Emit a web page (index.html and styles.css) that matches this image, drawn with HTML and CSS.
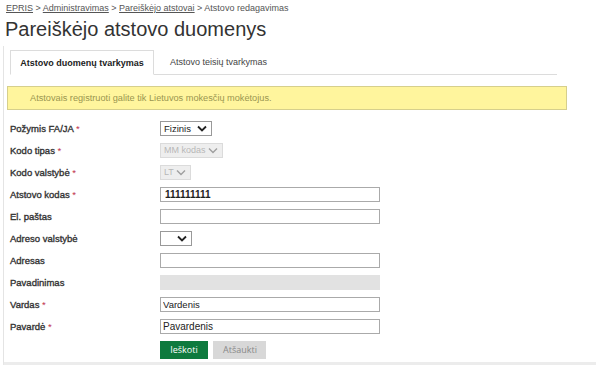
FILE: index.html
```html
<!DOCTYPE html>
<html lang="lt">
<head>
    <meta charset="UTF-8">
    <meta name="viewport" content="width=device-width, initial-scale=1.0">
    <title>Atstovo redagavimas</title>

    <link rel="stylesheet" href="styles.css">
</head>
<body>

    <div class="crumbs">
        <a href="#">EPRIS</a> &gt; <a href="#">Administravimas</a> &gt; <a href="#">Pareiškėjo atstovai</a> &gt; Atstovo redagavimas
    </div>
    <h1>Pareiškėjo atstovo duomenys</h1>

    <div class="panel">
        <div class="tabs">
            <div class="tab active">Atstovo duomenų tvarkymas</div>
            <div class="tab">Atstovo teisių tvarkymas</div>
        </div>

        <div class="alert">Atstovais registruoti galite tik Lietuvos mokesčių mokėtojus.</div>

        <div class="form">
            <div class="row">
                <label>Požymis FA/JA <span class="req">*</span></label>
                <select class="sel sel-fa"><option>Fizinis</option></select>
            </div>
            <div class="row">
                <label>Kodo tipas <span class="req">*</span></label>
                <select class="sel sel-mm" disabled><option>MM kodas</option></select>
            </div>
            <div class="row">
                <label>Kodo valstybė <span class="req">*</span></label>
                <select class="sel sel-lt" disabled><option>LT</option></select>
            </div>
            <div class="row">
                <label>Atstovo kodas <span class="req">*</span></label>
                <input class="txt txt-code" type="text" value="111111111">
            </div>
            <div class="row">
                <label>El. paštas</label>
                <input class="txt" type="text">
            </div>
            <div class="row">
                <label>Adreso valstybė</label>
                <select class="sel sel-empty"><option></option></select>
            </div>
            <div class="row">
                <label>Adresas</label>
                <input class="txt" type="text">
            </div>
            <div class="row">
                <label>Pavadinimas</label>
                <input class="txt" type="text" disabled>
            </div>
            <div class="row">
                <label>Vardas <span class="req">*</span></label>
                <input class="txt txt-name" type="text" value="Vardenis">
            </div>
            <div class="row">
                <label>Pavardė <span class="req">*</span></label>
                <input class="txt txt-surname" type="text" value="Pavardenis">
            </div>
            <div class="row buttons">
                <span></span>
                <div>
                    <button class="btn btn-ok">Ieškoti</button>
                    <button class="btn btn-cancel">Atšaukti</button>
                </div>
            </div>
        </div>
    </div>

</body>
</html>
```

FILE: styles.css
```css
body{
    margin: 0;
    font-family: "Liberation Sans", Arial, sans-serif;
    color: #333;
    background: #fff;
}

.crumbs{
    padding: 2px 6px 0;
    font-size: 9px;
    line-height: 12px;
    color: #555;
}

.crumbs a{
    color: #555;
}

h1{
    margin: 2px 0 0 5px;
    font-size: 20px;
    font-weight: normal;
    line-height: 26px;
    color: #333;
}

.panel{
    margin-top: 4px;
    margin-left: 3px;
    height: 312px;
    padding-top: 4px;
    border-left: 1px solid #e4e4e4;
    border-bottom: 6px solid #ececec;
}

.tabs{
    display: flex;
    align-items: flex-end;
    width: 547px;
    height: 24px;
    margin-left: 6px;
    border-bottom: 1px solid #dcdcdc;
    font-size: 9px;
}

.tab{
    padding: 0 16px;
    line-height: 24px;
    white-space: nowrap;
    color: #444;
}

.tab.active{
    box-sizing: border-box;
    width: 144px;
    height: 25px;
    margin-bottom: -1px;
    padding: 0;
    border: 1px solid #dcdcdc;
    border-bottom: 1px solid #fff;
    background: #fff;
    font-weight: bold;
    color: #222;
    text-align: center;
}

.alert{
    width: 536px;
    height: 22px;
    margin: 11px 0 0 3px;
    padding-left: 22px;
    border: 1px solid #d6cf8c;
    background: #fff59d;
    font-size: 9.2px;
    line-height: 22px;
    color: #9a9650;
}

.form{
    margin-top: 7px;
    padding-left: 6px;
}

.row{
    display: grid;
    grid-template-columns: 150px auto;
    align-items: center;
    height: 22px;
}

.row label{
    font-size: 9.5px;
    color: #333;
    -webkit-text-stroke: 0.35px #333;
}

.req{
    color: #c0304a;
    -webkit-text-stroke: 0;
}

.sel{
    -webkit-appearance: none;
    appearance: none;
    height: 15px;
    padding: 0 0 0 3px;
    border: 1px solid #999;
    border-radius: 0;
    background: #fff url("data:image/svg+xml;utf8,<svg xmlns='http://www.w3.org/2000/svg' width='10' height='7' viewBox='0 0 10 7'><path d='M1 1.5 L5 5.5 L9 1.5' fill='none' stroke='%23222' stroke-width='1.8'/></svg>") no-repeat right 4px center;
    font-family: inherit;
    font-size: 9.5px;
    line-height: 13px;
    color: #222;
}

.sel-fa{ width: 52px; }
.sel-mm{ width: 63px; font-size: 9px; background-color: #e8e8e8; border-color: #ccc; color: #999; }
.sel-lt{ width: 31px; font-size: 9px; background-color: #e8e8e8; border-color: #ccc; color: #999; }
.sel-empty{ width: 32px; }

.sel:disabled{
    background-image: url("data:image/svg+xml;utf8,<svg xmlns='http://www.w3.org/2000/svg' width='10' height='7' viewBox='0 0 10 7'><path d='M1 1.5 L5 5.5 L9 1.5' fill='none' stroke='%23777' stroke-width='1.4'/></svg>");
}

.txt{
    width: 220px;
    height: 15px;
    padding: 0 4px;
    box-sizing: border-box;
    border: 1px solid #aaa;
    font-family: inherit;
    font-size: 10px;
    color: #222;
}

.txt:disabled{
    background: #e2e2e2;
    border-color: #e2e2e2;
}

.txt-code{ font-weight: bold; }
.txt-name{ font-size: 9.5px; padding-left: 2px; }
.txt-surname{ font-size: 10px; padding-left: 2px; }

.buttons{
    height: 24px;
}

.btn{
    height: 18px;
    border: none;
    font-family: "Open Sans", sans-serif;
    font-size: 9px;
}

.btn-ok{
    width: 48px;
    background: #0e7a3e;
    color: #fff;
}

.btn-cancel{
    width: 53px;
    margin-left: 1px;
    background: #d8d8d8;
    color: #888;
}
```
